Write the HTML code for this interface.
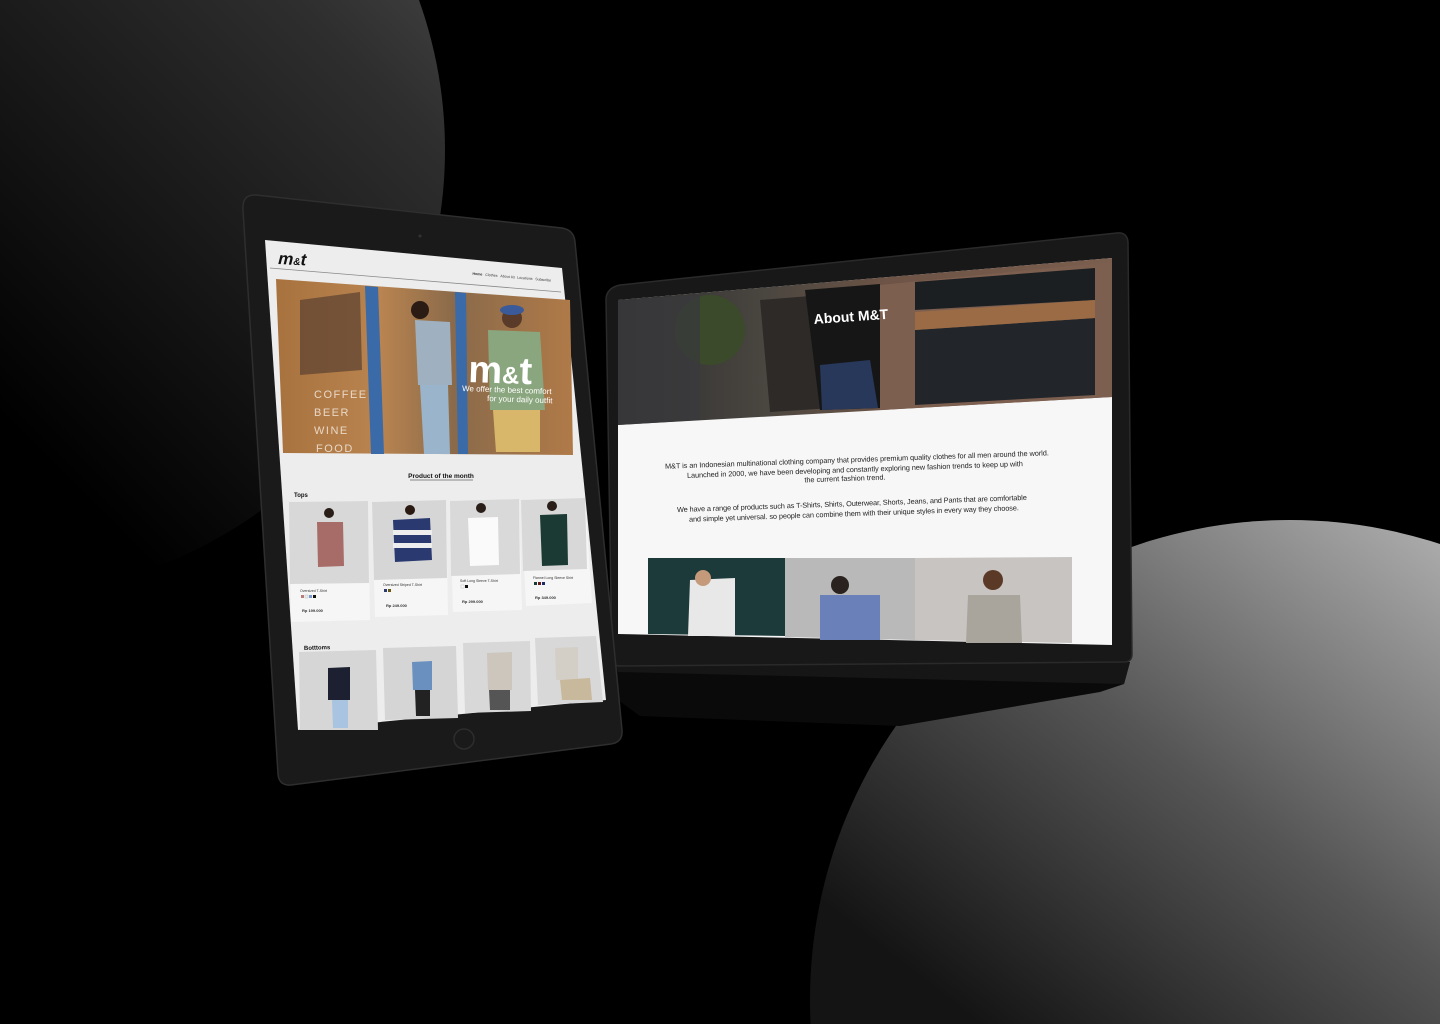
<!DOCTYPE html>
<html><head><meta charset="utf-8"><style>
html,body{margin:0;padding:0;background:#000;width:1440px;height:1024px;overflow:hidden}
svg{display:block}
text{font-family:"Liberation Sans",sans-serif}
</style></head><body>
<svg width="1440" height="1024" viewBox="0 0 1440 1024" xmlns="http://www.w3.org/2000/svg">
<defs>
<linearGradient id="g1" x1="0" y1="1" x2="1" y2="0">
<stop offset="0.35" stop-color="#000"/><stop offset="0.75" stop-color="#2e2e2e"/><stop offset="1" stop-color="#5c5c5c"/>
</linearGradient>
<linearGradient id="g2" x1="0.1" y1="0.9" x2="0.8" y2="0">
<stop offset="0.3" stop-color="#141414"/><stop offset="0.6" stop-color="#555"/><stop offset="1" stop-color="#c4c4c4"/>
</linearGradient>
<linearGradient id="hero" x1="0" y1="0" x2="1" y2="0">
<stop offset="0" stop-color="#a8723e"/><stop offset="0.35" stop-color="#b98450"/><stop offset="0.6" stop-color="#8a6a4a"/><stop offset="1" stop-color="#b07a48"/>
</linearGradient>
<linearGradient id="lh" x1="0" y1="0" x2="1" y2="0">
<stop offset="0" stop-color="#2e2e30"/><stop offset="0.3" stop-color="#4a4640"/><stop offset="0.55" stop-color="#6e5446"/><stop offset="1" stop-color="#7a5e4e"/>
</linearGradient>
</defs>
<rect width="1440" height="1024" fill="#000"/>
<circle cx="0" cy="150" r="445" fill="url(#g1)"/>
<circle cx="1290" cy="1000" r="480" fill="url(#g2)"/>

<!-- Laptop -->
<path d="M614 660 L1130 662 L1124 684 L1100 692 L900 726 L640 716 L618 700 Z" fill="#0a0a0a"/>
<path d="M614 660 L1130 662 L1124 684 L618 672 Z" fill="#161616"/>
<path d="M620 285 Q606 288 606 300 L612 658 Q612 666 620 666 L1124 662 Q1132 662 1132 654 L1128 242 Q1127 232 1117 233 Z" fill="#181818" stroke="#2a2a2a" stroke-width="1.5"/>
<polygon points="618,300 1112,258 1112,645 618,634" fill="#f7f7f7"/>
<polygon points="618,300 1112,258 1112,397 618,425" fill="url(#lh)"/>
<polygon points="880,285 1112,262 1112,397 880,410" fill="#7d5f50"/>
<polygon points="915,282 1095,268 1095,300 915,310" fill="#1c1f22"/>
<polygon points="915,330 1095,318 1095,395 915,405" fill="#22262a"/>
<polygon points="915,312 1095,300 1095,318 915,330" fill="#9a6b45"/>
<polygon points="760,300 860,292 880,405 770,412" fill="#2e2a28"/>
<polygon points="805,290 880,284 880,408 820,410" fill="#161616"/>
<polygon points="820,365 870,360 878,408 822,410" fill="#27385a"/>
<circle cx="710" cy="330" r="35" fill="#3a4a2a"/>
<polygon points="618,300 700,295 700,420 618,425" fill="#3a3a3c" opacity="0.8"/>
<text x="814" y="324" fill="#fff" font-size="14" font-weight="bold" transform="rotate(-4 814 324)">About M&amp;T</text>
<g fill="#222" font-size="7.3" text-anchor="middle">
<text x="857" y="462" transform="rotate(-2 857 462)" textLength="384">M&amp;T is an Indonesian multinational clothing company that provides premium quality clothes for all men around the world.</text>
<text x="855" y="472" transform="rotate(-2 855 472)" textLength="336">Launched in 2000, we have been developing and constantly exploring new fashion trends to keep up with</text>
<text x="845" y="481" transform="rotate(-2 845 481)">the current fashion trend.</text>
<text x="852" y="506" transform="rotate(-2 852 506)" textLength="350">We have a range of products such as T-Shirts, Shirts, Outerwear, Shorts, Jeans, and Pants that are comfortable</text>
<text x="854" y="516" transform="rotate(-2 854 516)" textLength="330">and simple yet universal. so people can combine them with their unique styles in every way they choose.</text>
</g>
<polygon points="648,558 785,558 785,636 648,634" fill="#1d3a3a"/>
<polygon points="690,580 735,578 735,636 688,636" fill="#e8e8e8"/>
<circle cx="703" cy="578" r="8" fill="#c49a7a"/>
<polygon points="785,558 915,558 915,640 785,637" fill="#b9b9b9"/>
<polygon points="820,595 880,595 880,640 820,640" fill="#6a80b8"/>
<circle cx="840" cy="585" r="9" fill="#2a221e"/>
<polygon points="915,558 1072,557 1072,643 915,640" fill="#c8c4c2"/>
<polygon points="968,595 1020,595 1022,643 966,643" fill="#a9a49c"/>
<circle cx="993" cy="580" r="10" fill="#5a3a26"/>

<!-- Tablet -->
<path d="M256 195 L562 228 Q574 230 575 242 L622 730 Q623 742 611 744 L291 785 Q279 786 278 774 L243 210 Q242 194 256 195 Z" fill="#1a1a1a" stroke="#2e2e2e" stroke-width="1.5"/>
<circle cx="420" cy="236" r="1.5" fill="#333"/>
<circle cx="464" cy="739" r="10" fill="none" stroke="#2d2d2d" stroke-width="1.5"/>
<polygon points="265,240 562,268 606,700 298,730" fill="#ededed"/>
<line x1="270" y1="268" x2="561" y2="292" stroke="#888" stroke-width="0.8"/>
<text x="278" y="264" font-size="17" font-weight="bold" font-style="italic" fill="#111" transform="rotate(3 278 264)">m<tspan font-size="10">&amp;</tspan>t</text>
<g font-size="3.6" fill="#333" transform="rotate(5 510 280)">
<text x="472" y="278" font-weight="bold">Home</text><text x="485" y="278">Clothes</text><text x="500" y="278">About Us</text><text x="517" y="278">Locations</text><text x="535" y="278">Subscribe</text>
</g>
<polygon points="276,279 570,300 573,455 283,453" fill="url(#hero)"/>
<polygon points="365,286 378,287 384,454 371,454" fill="#3a6aa8"/>
<polygon points="455,292 466,293 468,454 458,454" fill="#3a6aa8"/>
<polygon points="300,300 360,292 362,370 300,375" fill="#5a4030" opacity="0.7"/>
<polygon points="415,320 450,322 452,385 418,385" fill="#9fb0c0"/>
<polygon points="420,385 448,385 450,454 424,454" fill="#9ab4cc"/>
<circle cx="420" cy="310" r="9" fill="#2a1c14"/>
<polygon points="488,330 540,332 545,410 490,410" fill="#8aa67e"/>
<polygon points="493,410 540,410 540,452 496,452" fill="#d8b66a"/>
<circle cx="512" cy="318" r="10" fill="#5a3a28"/>
<ellipse cx="512" cy="310" rx="12" ry="5" fill="#3a5a9a"/>
<g fill="#f2e8dc" font-size="11" letter-spacing="1.5" opacity="0.85">
<text x="314" y="398">COFFEE</text><text x="314" y="416">BEER</text><text x="314" y="434">WINE</text><text x="316" y="452">FOOD</text>
</g>
<text x="468" y="382" font-size="38" font-weight="bold" fill="#fff" transform="rotate(2 468 382)">m<tspan font-size="24">&amp;</tspan>t</text>
<text x="462" y="391" font-size="8" fill="#fff" transform="rotate(2 462 391)">We offer the best comfort</text>
<text x="487" y="401" font-size="8" fill="#fff" transform="rotate(2 487 401)">for your daily outfit</text>
<text x="441" y="478" font-size="6.5" font-weight="bold" fill="#111" text-anchor="middle">Product of the month</text>
<line x1="410" y1="480" x2="473" y2="480" stroke="#222" stroke-width="0.6"/>
<text x="294" y="497" font-size="6" font-weight="bold" fill="#111">Tops</text>
<text x="304" y="650" font-size="6" font-weight="bold" fill="#111" transform="rotate(-2 304 650)">Botttoms</text>
<g>
<polygon points="289,502 368,501 370,620 291,622" fill="#f6f6f6"/>
<polygon points="289,502 368,501 369,583 290,584" fill="#d8d8d8"/>
<polygon points="317,522 343,522 344,566 318,567" fill="#a86c68"/>
<circle cx="329" cy="513" r="5" fill="#2a1e18"/>
<text x="300" y="592" font-size="3.5" fill="#333">Oversized T-Shirt</text>
<rect x="301" y="595" width="3" height="3" fill="#b87c7c"/><rect x="305" y="595" width="3" height="3" fill="#eee" stroke="#999" stroke-width="0.3"/><rect x="309" y="595" width="3" height="3" fill="#7a9ad0"/><rect x="313" y="595" width="3" height="3" fill="#111"/>
<text x="302" y="612" font-size="4" font-weight="bold" fill="#333">Rp 199.000</text>
<polygon points="372,502 446,500 448,615 375,617" fill="#f6f6f6"/>
<polygon points="372,502 446,500 447,578 374,580" fill="#d6d6d6"/>
<polygon points="393,520 430,518 432,560 395,562" fill="#2a3a70"/>
<rect x="393" y="530" width="39" height="5" fill="#eee"/><rect x="393" y="543" width="39" height="5" fill="#eee"/>
<circle cx="410" cy="510" r="5" fill="#2a1a12"/>
<text x="383" y="586" font-size="3.5" fill="#333">Oversized Striped T-Shirt</text>
<rect x="384" y="589" width="3" height="3" fill="#2a3a70"/><rect x="388" y="589" width="3" height="3" fill="#6a5a10"/>
<text x="386" y="607" font-size="4" font-weight="bold" fill="#333">Rp 249.000</text>
<polygon points="450,501 519,499 522,610 453,612" fill="#f6f6f6"/>
<polygon points="450,501 519,499 520,574 451,576" fill="#d9d9d9"/>
<polygon points="468,518 498,517 499,565 470,566" fill="#fafafa"/>
<circle cx="481" cy="508" r="5" fill="#2a1e18"/>
<text x="460" y="582" font-size="3.5" fill="#333">Soft Long Sleeve T-Shirt</text>
<rect x="461" y="585" width="3" height="3" fill="#fff" stroke="#999" stroke-width="0.3"/><rect x="465" y="585" width="3" height="3" fill="#111"/>
<text x="462" y="603" font-size="4" font-weight="bold" fill="#333">Rp 299.000</text>
<polygon points="521,500 585,498 592,603 526,606" fill="#f6f6f6"/>
<polygon points="521,500 585,498 587,569 523,571" fill="#d8d8d8"/>
<polygon points="540,515 567,514 568,565 542,566" fill="#1c3a34"/>
<circle cx="552" cy="506" r="5" fill="#2a1e18"/>
<text x="533" y="579" font-size="3.5" fill="#333">Flannel Long Sleeve Shirt</text>
<rect x="534" y="582" width="3" height="3" fill="#1c3a34"/><rect x="538" y="582" width="3" height="3" fill="#6a1a1a"/><rect x="542" y="582" width="3" height="3" fill="#1a2a6a"/>
<text x="535" y="599" font-size="4" font-weight="bold" fill="#333">Rp 349.000</text>
</g>
<polygon points="299,652 376,650 378,730 300,730" fill="#d6d6d6"/>
<polygon points="328,668 350,667 350,700 328,700" fill="#1c2030"/>
<polygon points="332,700 348,700 348,728 333,728" fill="#a8c4e0"/>
<polygon points="383,648 456,646 458,718 385,720" fill="#d5d5d5"/>
<polygon points="412,662 432,661 432,690 413,690" fill="#6a90c0"/>
<polygon points="415,690 430,690 430,716 416,716" fill="#222"/>
<polygon points="463,643 530,641 531,711 465,713" fill="#d8d8d8"/>
<polygon points="487,653 512,652 512,690 488,690" fill="#ccc6bc"/>
<polygon points="489,690 510,690 510,710 490,710" fill="#555"/>
<polygon points="535,638 596,636 603,702 538,705" fill="#d8d8d8"/>
<polygon points="555,648 578,647 578,680 556,680" fill="#d4cfc6"/>
<polygon points="560,680 590,678 592,700 562,700" fill="#c8b89c"/>
</svg>
</body></html>
